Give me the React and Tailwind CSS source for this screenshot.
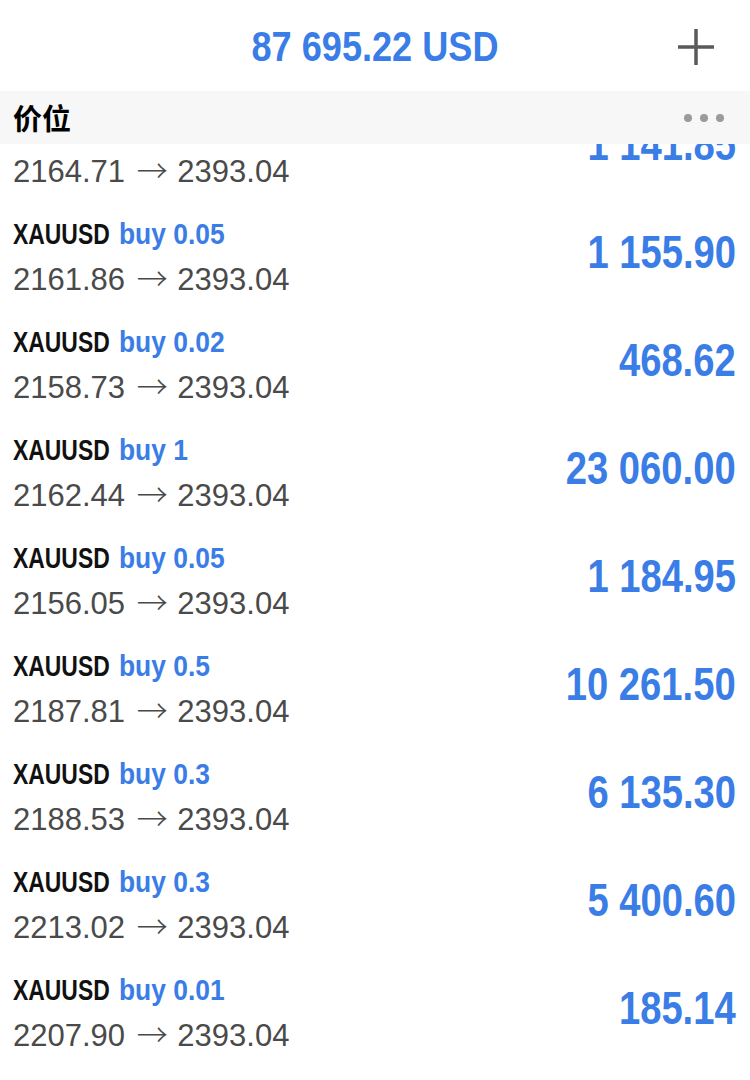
import React from "react";

const rows = [
  { lot: "0.05", from: "2164.71", val: "1 141.85" },
  { lot: "0.05", from: "2161.86", val: "1 155.90" },
  { lot: "0.02", from: "2158.73", val: "468.62" },
  { lot: "1", from: "2162.44", val: "23 060.00" },
  { lot: "0.05", from: "2156.05", val: "1 184.95" },
  { lot: "0.5", from: "2187.81", val: "10 261.50" },
  { lot: "0.3", from: "2188.53", val: "6 135.30" },
  { lot: "0.3", from: "2213.02", val: "5 400.60" },
  { lot: "0.01", from: "2207.90", val: "185.14" },
];

const sans = { fontFamily: '"Liberation Sans", Arial, sans-serif' };
const cjk = { fontFamily: '"Noto Sans CJK SC", sans-serif' };

export default function App() {
  return (
    <div className="w-[750px] h-[1080px] bg-white overflow-hidden flex flex-col">
      <div className="h-[91px] shrink-0 relative flex justify-center pt-[25px]">
        <span
          style={sans}
          className="inline-block h-[43px] text-[43px] font-bold text-[#3a7de6] leading-[43px] scale-x-[0.84] origin-center whitespace-nowrap"
        >
          87 695.22 USD
        </span>
        <svg className="absolute left-[678px] top-[29px]" width="36" height="36" viewBox="0 0 36 36">
          <path d="M18 0V36M0 18H36" stroke="#5a5a5a" strokeWidth="3.5" />
        </svg>
      </div>
      <div className="h-[53px] shrink-0 bg-[#f7f7f7] flex items-center justify-between pl-[13px] pr-[26px] relative z-10">
        <span style={cjk} className="text-[29px] font-bold text-black leading-none">
          价位
        </span>
        <div className="flex gap-[8px]">
          <span className="w-[8px] h-[8px] rounded-full bg-[#9b9b9b]" />
          <span className="w-[8px] h-[8px] rounded-full bg-[#9b9b9b]" />
          <span className="w-[8px] h-[8px] rounded-full bg-[#9b9b9b]" />
        </div>
      </div>
      <div className="flex-1 overflow-hidden">
        <div className="mt-[-53px]">
          {rows.map((r, i) => (
            <div key={i} className="h-[108px] flex items-start justify-between pl-[13px] pr-[14px]">
              <div className="flex flex-col">
                <div
                  style={sans}
                  className={
                    "text-[29px] font-bold leading-[29px] h-[29px] mt-[21px] whitespace-nowrap" +
                    (i === 0 ? " invisible" : "")
                  }
                >
                  <span className="inline-block text-[#111] scale-x-[0.79] origin-left mr-[-26px]">XAUUSD</span>
                  <span className="inline-block text-[#3a7de6] scale-x-[0.91] origin-left ml-[10px]">
                    buy {r.lot}
                  </span>
                </div>
                <div style={sans} className="text-[31px] text-[#4a4a4a] leading-[31px] mt-[12px] whitespace-nowrap">
                  {r.from}{" "}
                  <span style={cjk} className="inline-block font-light ml-[3px] mr-[1px]">
                    →
                  </span>{" "}
                  2393.04
                </div>
              </div>
              <div
                style={sans}
                className="inline-block mt-[30px] text-[46px] font-bold text-[#3a7de6] leading-[46px] scale-x-[0.83] origin-right whitespace-nowrap"
              >
                {r.val}
              </div>
            </div>
          ))}
        </div>
      </div>
    </div>
  );
}
